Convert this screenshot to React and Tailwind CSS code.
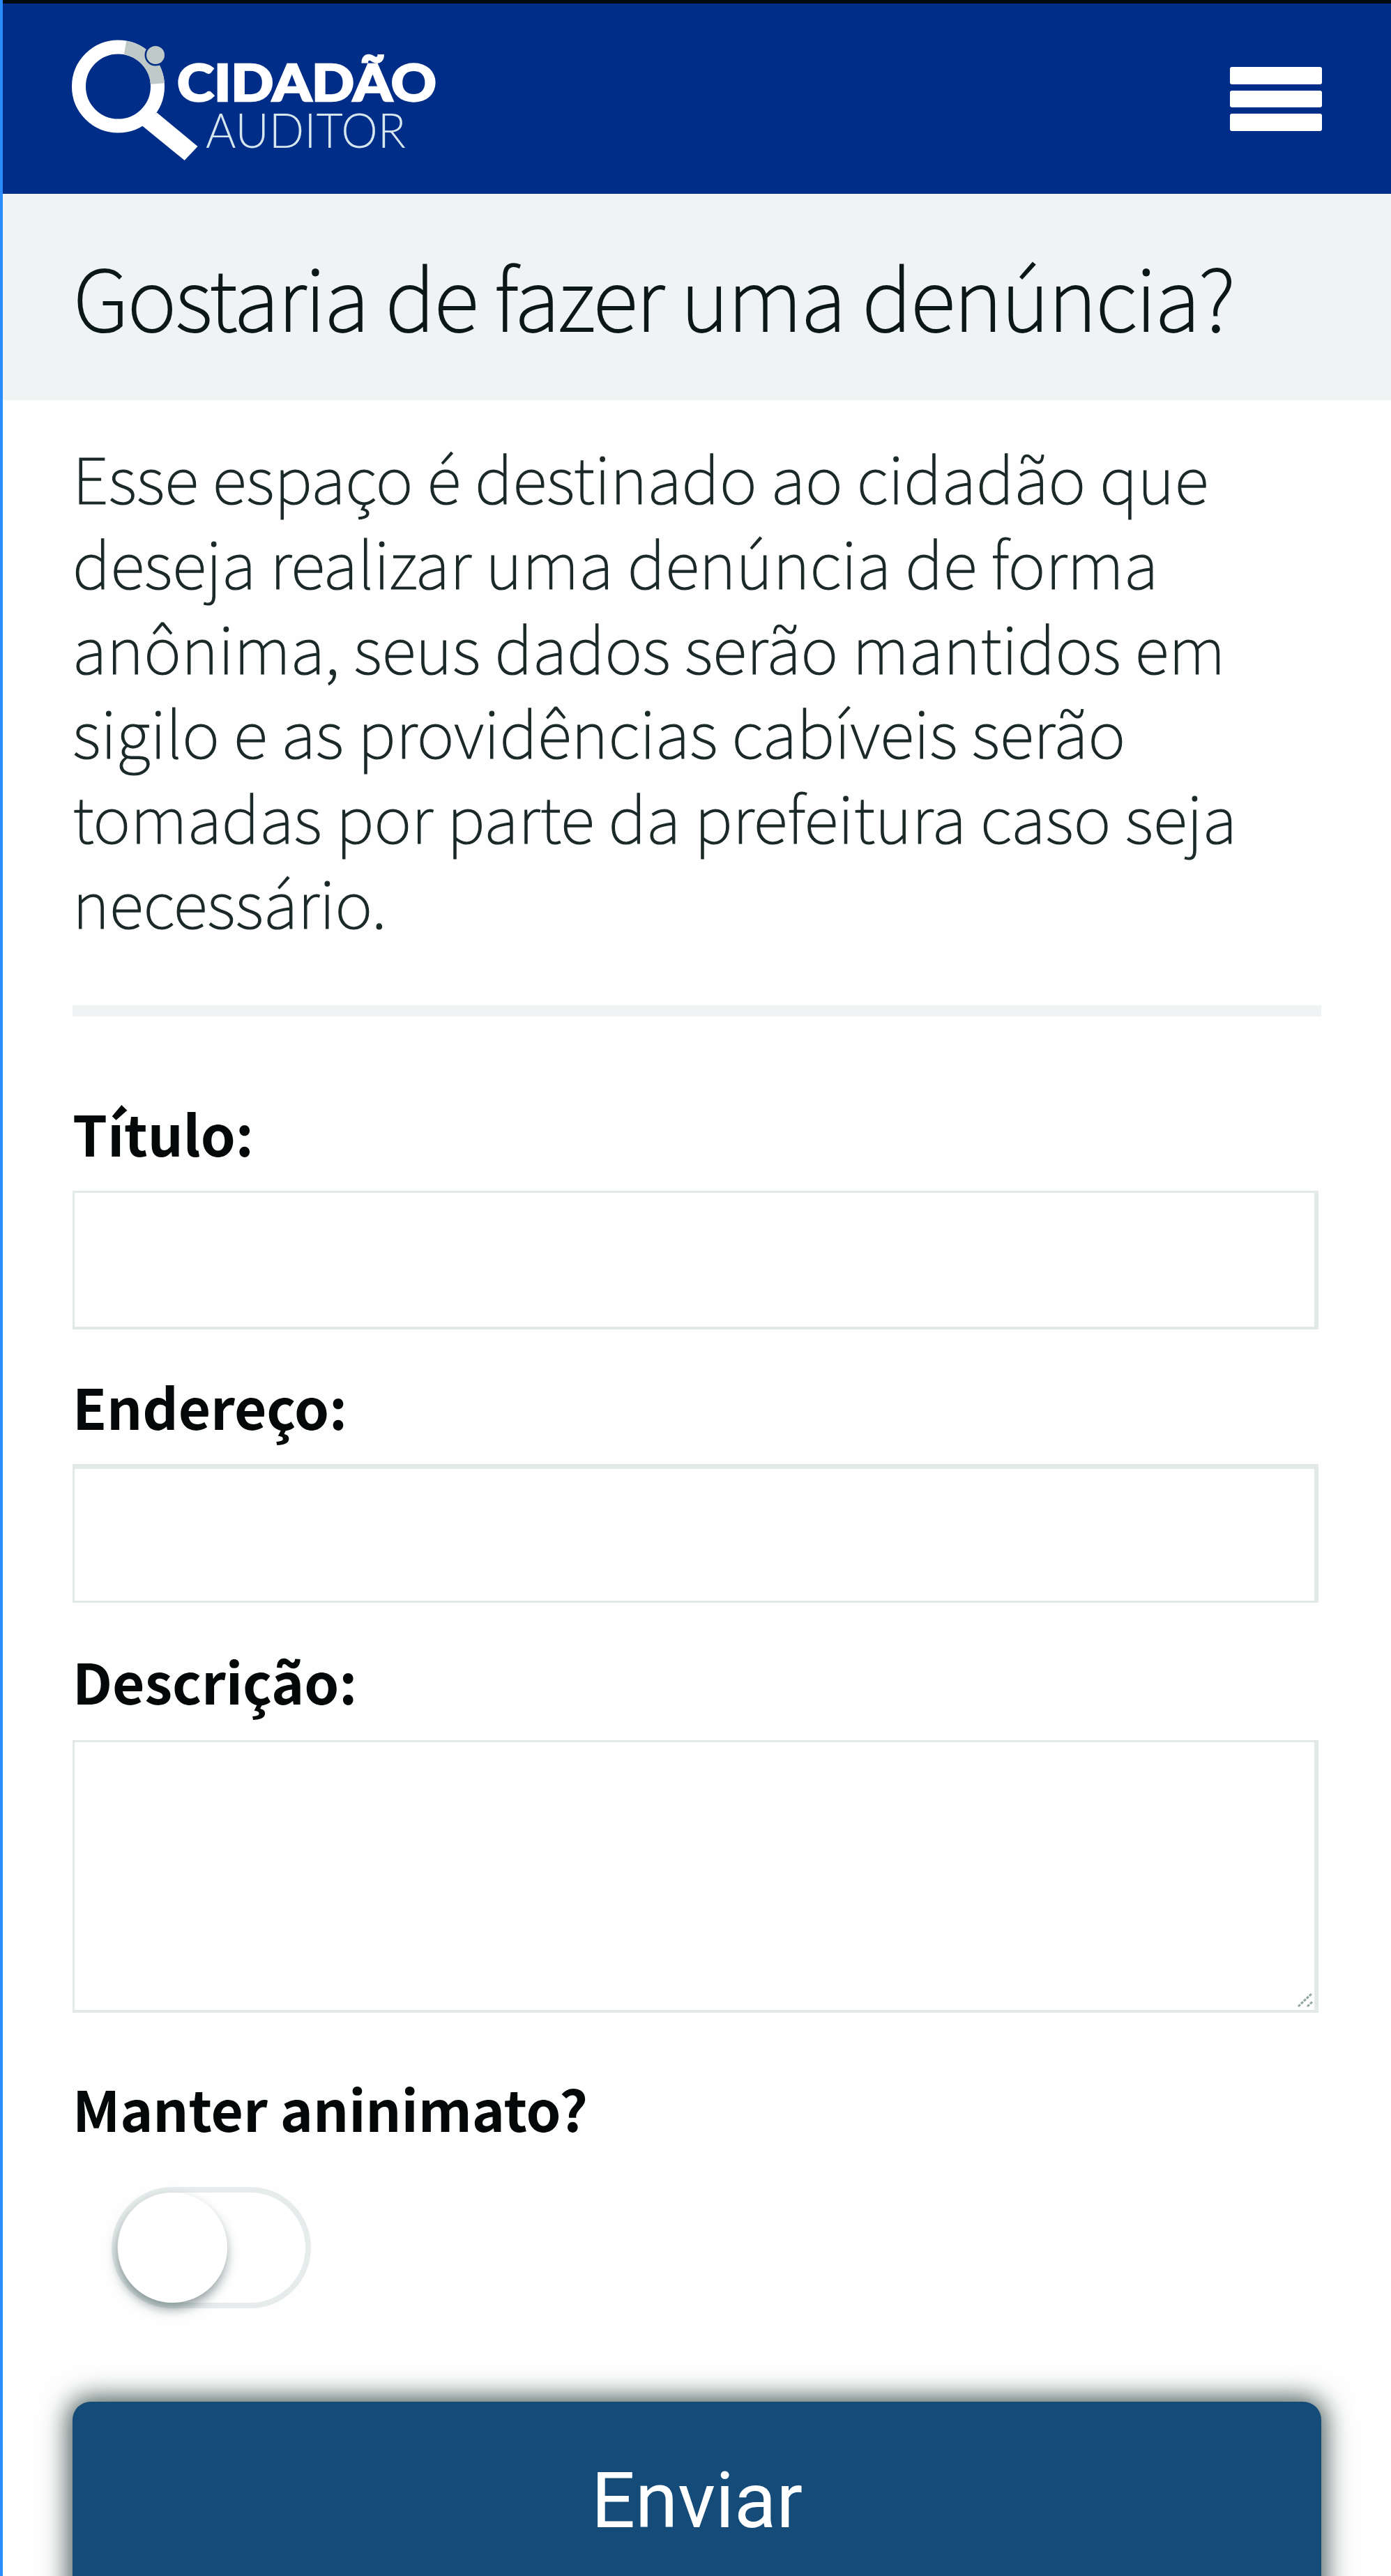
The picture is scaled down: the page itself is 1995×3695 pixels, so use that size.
import React from "react";

function Logo() {
  return (
    <svg viewBox="0 0 530 180" className="h-[180px] w-[530px] text-white" role="img" aria-label="Cidadão Auditor">
      <circle cx="66.5" cy="72" r="56.5" fill="none" stroke="currentColor" strokeWidth="20" />
      <path d="M76.500 16.400A56.500 56.500 0 0 1 122.900 68" fill="none" stroke="#bfc9c8" strokeWidth="20" />
      <circle cx="120" cy="27" r="15.5" fill="#002d88" />
      <circle cx="120" cy="27" r="13" fill="#bfc9c8" />
      <path d="M122 109.500 180.500 158 161.700 178 101 128.500Z" fill="currentColor" />
      <text x="151" y="93" textLength="372" lengthAdjust="spacingAndGlyphs" stroke="white" strokeWidth="2.5" className="fill-white font-['Lato'] text-[73px] font-black">CIDADÃO</text>
      <text x="192" y="160" textLength="287" lengthAdjust="spacingAndGlyphs" className="fill-[#d5e6ee] font-['Lato'] text-[69px] font-light">AUDITOR</text>
    </svg>
  );
}

function Label({ children, className }) {
  return <label className={`block text-[80px] leading-[100px] font-bold tracking-[-0.1px] text-[#050808] ${className}`}>{children}</label>;
}

export default function App() {
  return (
    <div className="h-[3695px] w-full overflow-hidden border-l-[4px] border-[#2b8cff] bg-[#fefefe] font-['Noto_Sans_CJK_JP','Noto_Sans',sans-serif]">
      <header className="flex h-[278px] items-start justify-between border-t-[5px] border-[#050a0c] bg-[#002d88] pr-[99px] pl-[99px]">
        <div className="mt-[47px]">
          <Logo />
        </div>
        <button aria-label="Menu" className="mt-[91px] flex w-[132px] flex-col gap-[9px]">
          <span className="block h-[24.500px] rounded-[3px] bg-white" />
          <span className="block h-[24.500px] rounded-[3px] bg-white" />
          <span className="block h-[24.500px] rounded-[3px] bg-white" />
        </button>
      </header>
      <section className="h-[296px] bg-[#eff3f3] pt-[65px] pl-[101px]">
        <h1 className="text-[120px] leading-[160px] font-thin tracking-[-1.600px] whitespace-nowrap text-[#0c1717] [-webkit-text-stroke:2px_#0c1717]">Gostaria de fazer uma denúncia?</h1>
      </section>
      <main className="px-[100px] pt-[49px]">
        <p className="text-[91.500px] leading-[121.800px] font-thin whitespace-nowrap text-[#1a2828] tracking-[0.050px] [-webkit-text-stroke:1.200px_#1a2828]">
          Esse espaço é destinado ao cidadão que<br />
          deseja realizar uma denúncia de forma<br />
          anônima, seus dados serão mantidos em<br />
          sigilo e as providências cabíveis serão<br />
          tomadas por parte da prefeitura caso seja<br />
          necessário.
        </p>
        <hr className="mt-[88px] h-[16px] border-0 bg-[#eff3f3]" />
        <form className="pt-[116px]">
          <Label>Título:</Label>
          <input className="mt-[34px] block h-[199px] w-[1787px] border-[3px] border-r-[6px] border-b-[4px] border-[#e2e9e7] bg-white" />
          <Label className="mt-[59px]">Endereço:</Label>
          <input className="mt-[34px] block h-[199px] w-[1787px] border-[3px] border-t-[7px] border-r-[6px] border-[#e2e9e7] bg-white" />
          <Label className="mt-[61px]">Descrição:</Label>
          <div className="relative mt-[36px] h-[391px] w-[1787px]">
            <textarea className="block h-full w-full resize-none border-[3px] border-r-[6px] border-b-[4px] border-[#e2e9e7] bg-white" />
            <svg viewBox="0 0 24 24" className="absolute right-[6px] bottom-[5px] size-[24px]" fill="none" stroke="#8fa3a2" strokeWidth="3">
              <path d="M1 20 21 1M14 20l7-6.500" strokeDasharray="4 1.500" />
            </svg>
          </div>
          <Label className="mt-[86px]">Manter aninimato?</Label>
          <button type="button" role="switch" aria-checked="false" aria-label="Manter aninimato?" className="mt-[64px] ml-[56px] flex h-[174px] w-[286px] items-start rounded-full border-[8px] border-[#e6ecec] bg-white">
            <span className="ml-[1px] block h-[158px] w-[157px] shrink-0 rounded-full bg-white shadow-[-1px_9px_16px_rgba(40,65,65,0.5)]" />
          </button>
          <button type="button" className="mt-[134px] block h-[360px] w-full rounded-[26px] bg-[#144b78] pb-[75px] font-['Roboto'] text-[111px] leading-[130px] text-white shadow-[0_0_36px_6px_rgba(5,35,30,0.75)]">
            Enviar
          </button>
        </form>
      </main>
    </div>
  );
}
